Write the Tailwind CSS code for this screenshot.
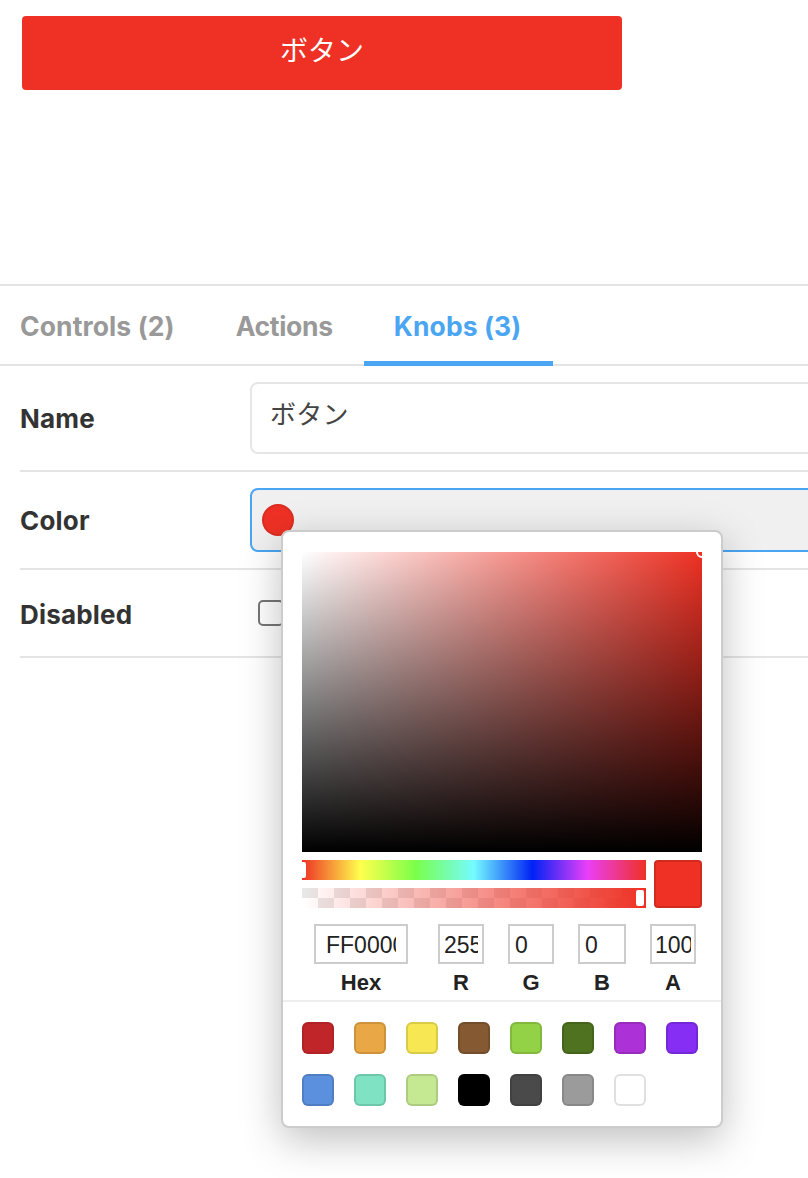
<!DOCTYPE html>
<html lang="ja">
<head>
    <meta charset="UTF-8">
    <title>Button knobs</title>
    <script src="https://cdn.jsdelivr.net/npm/@tailwindcss/browser@4"></script>
</head>
<body class="h-[1178px] overflow-hidden bg-white text-[#333] font-['Inter','Noto_Sans_CJK_JP',sans-serif]">
    <!-- Preview -->
    <div class="h-[284px] pt-4 pl-[22px]">
        <button class="w-[600px] h-[74px] rounded-[4px] bg-[#ee3124] text-white text-[28px] font-['Noto_Sans_CJK_JP',sans-serif] pb-[8px]">ボタン</button>
    </div>

    <div class="border-t-2 border-[#e4e4e4]">
        <!-- Tabs -->
        <div class="h-[80px] flex -ml-[11px] border-b-2 border-[#e4e4e4] text-[26.5px] tracking-[0.1px] font-bold text-[#999]">
            <div class="px-[31px] flex items-center pt-1">Controls (2)</div>
            <div class="pl-[30px] pr-[31px] flex items-center pt-1 tracking-[-0.3px]">Actions</div>
            <div class="pl-[30px] pr-[32px] flex items-center pt-[7px] text-[#4aa5f2] border-b-[5px] border-[#4aa5f2] -mb-[2px]">Knobs (3)</div>
        </div>

        <!-- Knob rows -->
        <div class="pl-5 text-[26px] tracking-[0.2px] font-bold">
            <div class="h-[106px] flex items-center border-b-2 border-[#e4e4e4]">
                <div class="w-[230px]">Name</div>
                <input readonly value="ボタン" class="flex-1 -mr-5 h-[72px] rounded-[8px] border-2 border-[#e6e6e6] pl-[18px] pb-3 text-[26px] font-normal text-[#444] outline-none font-['Noto_Sans_CJK_JP',sans-serif]">
            </div>
            <div class="h-[98px] flex items-center border-b-2 border-[#e4e4e4]">
                <div class="w-[230px]">Color</div>
                <div class="relative flex-1 -mr-5 h-[64px]">
                    <div class="h-full flex items-center rounded-[8px] border-2 border-[#4aa5f2] bg-[#f0f0f0] pl-[10px]">
                        <div class="w-8 h-8 rounded-full bg-[#ee3124] shadow-[inset_0_0_0_2px_rgba(0,0,0,0.08)]"></div>
                    </div>

                    <!-- Colour picker popover -->
                    <div class="absolute z-10 left-[31px] top-[42px] w-[442px] h-[598px] rounded-[8px] border-2 border-[#ccc] bg-white shadow-[0_12px_40px_rgba(0,0,0,0.25)] tracking-normal font-['Liberation_Sans',sans-serif]">
                        <div class="pt-5 px-[19px]">
                            <div class="relative w-[400px] h-[300px] overflow-hidden bg-[linear-gradient(to_bottom,transparent,#000),linear-gradient(to_right,#fff,#ee3124)]">
                                <div class="absolute -right-[6px] -top-[6px] w-3 h-3 rounded-full border-2 border-white"></div>
                            </div>

                            <div class="flex gap-2 mt-2">
                                <div class="w-[344px] flex flex-col gap-2">
                                    <div class="relative h-5 bg-[linear-gradient(to_right,#ee3124_0%,#ffff4d_17%,#7aff4a_33%,#74fbff_50%,#0022f5_67%,#ea3ff7_83%,#ee3124_100%)]">
                                        <div class="absolute left-0 top-[2px] w-1 h-4 rounded-r-[2px] bg-white"></div>
                                    </div>
                                    <div class="relative h-5 bg-[linear-gradient(to_right,transparent,#ee3124),repeating-conic-gradient(#fff_0%_25%,#e8e8e8_0%_50%)] bg-[length:100%_100%,32px_20px]">
                                        <div class="absolute right-[2px] top-[2px] w-2 h-4 rounded-[2px] bg-white"></div>
                                    </div>
                                </div>
                                <div class="w-12 h-12 rounded-[4px] bg-[#ee3124] shadow-[inset_0_0_0_2px_rgba(0,0,0,0.12)]"></div>
                            </div>

                            <!-- Fields -->
                            <div class="flex mt-4 text-[22px] text-[#222]">
                                <div class="ml-3 w-[94px] flex flex-col items-center">
                                    <input readonly value="FF0000" class="w-full h-10 border-2 border-[#ccc] px-[10px] pt-[3px] text-[23px] font-normal outline-none">
                                    <span class="mt-[5px] font-bold leading-7">Hex</span>
                                </div>
                                <div class="ml-[30px] w-[46px] flex flex-col items-center">
                                    <input readonly value="255" class="w-full h-10 border-2 border-[#ccc] px-1 pt-[3px] text-[23px] font-normal outline-none">
                                    <span class="mt-[5px] font-bold leading-7">R</span>
                                </div>
                                <div class="ml-6 w-[46px] flex flex-col items-center">
                                    <input readonly value="0" class="w-full h-10 border-2 border-[#ccc] px-[5px] pt-[3px] text-[23px] font-normal outline-none">
                                    <span class="mt-[5px] font-bold leading-7">G</span>
                                </div>
                                <div class="ml-6 w-12 flex flex-col items-center">
                                    <input readonly value="0" class="w-full h-10 border-2 border-[#ccc] px-[5px] pt-[3px] text-[23px] font-normal outline-none">
                                    <span class="mt-[5px] font-bold leading-7">B</span>
                                </div>
                                <div class="ml-6 w-[46px] flex flex-col items-center">
                                    <input readonly value="100" class="w-full h-10 border-2 border-[#ccc] px-[3px] pt-[3px] text-[23px] font-normal outline-none">
                                    <span class="mt-[5px] font-bold leading-7">A</span>
                                </div>
                            </div>
                        </div>

                        <!-- Preset swatches -->
                        <div class="mt-[3px] border-t-2 border-[#eee] pt-5 pl-[19px] grid grid-cols-[repeat(8,32px)] gap-x-5 gap-y-5">
                            <div class="h-8 rounded-[6px] bg-[#bf2529] shadow-[inset_0_0_0_2px_rgba(0,0,0,0.08)]"></div>
                            <div class="h-8 rounded-[6px] bg-[#e9a845] shadow-[inset_0_0_0_2px_rgba(0,0,0,0.12)]"></div>
                            <div class="h-8 rounded-[6px] bg-[#f7e752] shadow-[inset_0_0_0_2px_rgba(0,0,0,0.12)]"></div>
                            <div class="h-8 rounded-[6px] bg-[#855931] shadow-[inset_0_0_0_2px_rgba(0,0,0,0.12)]"></div>
                            <div class="h-8 rounded-[6px] bg-[#93d246] shadow-[inset_0_0_0_2px_rgba(0,0,0,0.12)]"></div>
                            <div class="h-8 rounded-[6px] bg-[#4e7220] shadow-[inset_0_0_0_2px_rgba(0,0,0,0.12)]"></div>
                            <div class="h-8 rounded-[6px] bg-[#ac31d6] shadow-[inset_0_0_0_2px_rgba(0,0,0,0.12)]"></div>
                            <div class="h-8 rounded-[6px] bg-[#862ef3] shadow-[inset_0_0_0_2px_rgba(0,0,0,0.12)]"></div>
                            <div class="h-8 rounded-[6px] bg-[#5b90de] shadow-[inset_0_0_0_2px_rgba(0,0,0,0.12)]"></div>
                            <div class="h-8 rounded-[6px] bg-[#7ee2c3] shadow-[inset_0_0_0_2px_rgba(0,0,0,0.12)]"></div>
                            <div class="h-8 rounded-[6px] bg-[#c5e993] shadow-[inset_0_0_0_2px_rgba(0,0,0,0.12)]"></div>
                            <div class="h-8 rounded-[6px] bg-black"></div>
                            <div class="h-8 rounded-[6px] bg-[#4a4a4a] shadow-[inset_0_0_0_2px_rgba(0,0,0,0.12)]"></div>
                            <div class="h-8 rounded-[6px] bg-[#9b9b9b] shadow-[inset_0_0_0_2px_rgba(0,0,0,0.12)]"></div>
                            <div class="h-8 rounded-[6px] bg-white shadow-[inset_0_0_0_2px_rgba(0,0,0,0.12)]"></div>
                        </div>
                    </div>
                </div>
            </div>
            <div class="h-[88px] flex items-center border-b-2 border-[#e4e4e4]">
                <div class="w-[238px] pt-[2px]">Disabled</div>
                <div class="w-[26px] h-[26px] rounded-[5px] border-2 border-[#767676] bg-white"></div>
            </div>
        </div>
    </div>
</body>
</html>
